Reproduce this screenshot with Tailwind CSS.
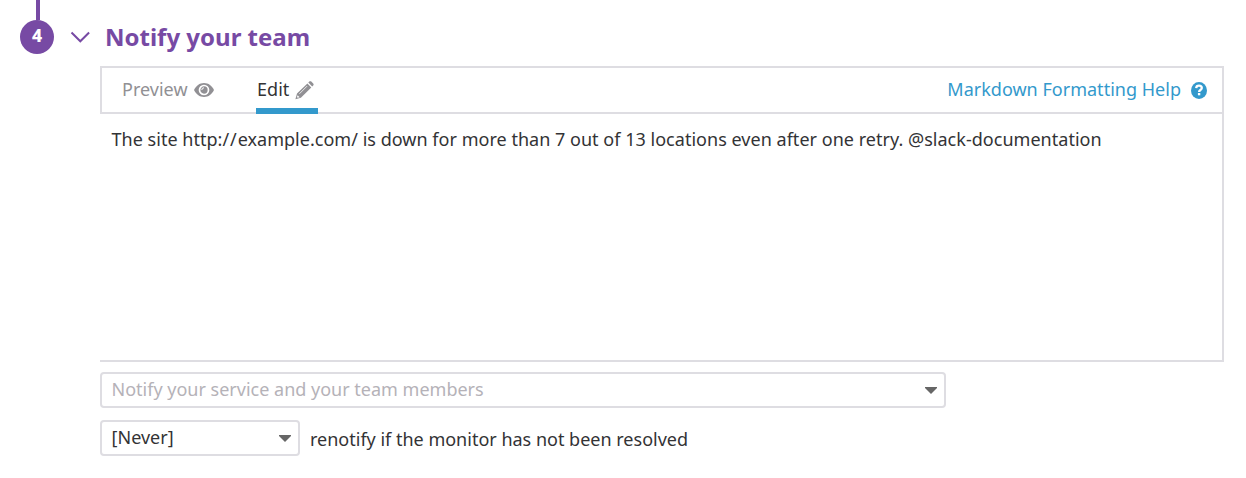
<!DOCTYPE html>
<html lang="en">
<head>
<meta charset="utf-8">
<title>Notify your team</title>
<script src="https://cdn.jsdelivr.net/npm/@tailwindcss/browser@4"></script>
</head>
<body class="overflow-hidden bg-white font-['Noto_Sans',sans-serif] text-[18px] tracking-[0.015px] text-[#333335]">
<section class="flex h-[478px] w-[1246px]">
  <div class="flex w-[54px] flex-col items-end">
    <div class="mr-[14px] h-5 w-1 bg-[#774aa4]"></div>
    <div class="flex size-[34px] items-center justify-center rounded-full bg-[#774aa4] pb-[3px] text-[17.5px] font-extrabold text-white">4</div>
  </div>
  <div class="ml-[46px] w-[1124px]">
    <h2 class="-ml-[30px] flex h-[66px] items-center pt-2 text-[24px] font-bold tracking-normal text-[#774aa4]">
      <svg class="mr-[15px] h-3 w-5" viewBox="0 0 20 12" fill="none" stroke="currentColor" stroke-width="2"><path d="M1.500 1.500 10.300 10.300 19.100 1.500"/></svg>Notify your team
    </h2>
    <div class="flex h-12 justify-between border-2 border-[#dedde2] pr-[15px] pl-5">
      <div class="flex">
        <button class="flex items-center gap-[6px] pb-[2px] text-[#919094]"><span>Preview</span>
          <svg class="mt-0.5 h-[14px] w-5" viewBox="0 0 20 14"><path fill="currentColor" d="M10 0C5.500 0 2 2.800 0 7c2 4.200 5.500 7 10 7s8-2.800 10-7C18 2.800 14.500 0 10 0Z"/><circle cx="10" cy="7" r="4.500" fill="none" stroke="#fff" stroke-width="1.700"/><path d="M10 4.800A2.200 2.200 0 0 0 7.800 7" fill="none" stroke="#fff" stroke-width="1"/></svg>
        </button>
        <button class="-mb-0.5 ml-[42px] flex h-[46px] w-[62px] items-center gap-[6px] border-b-6 border-[#3399cc] pt-[2px] pl-[1.500px]"><span>Edit</span>
          <svg class="mt-0.5 size-[19px] shrink-0 text-[#919094]" viewBox="0 0 19 19" fill="currentColor"><path d="M13.300 1.500 14.300.6c.6-.6 1.400-.6 2 0l1.900 1.900c.6.600.6 1.400 0 2L17.200 5.500ZM12.400 2.400 16.300 6.400 5.900 16.700.4 18.300 2 12.600Z"/><path d="m12.100 5.100-7.700 7.700" stroke="#fff" stroke-width=".8" fill="none"/><path d="m2.600 14.200 2 2-2 .6-.6-.7Z" fill="#fff"/></svg>
        </button>
      </div>
      <a class="flex items-center gap-[10px] pb-[2px] text-[#3399cc]"><span>Markdown Formatting Help</span>
        <svg class="mt-0.5 h-[17px] w-4" viewBox="0 0 16 17"><ellipse cx="8" cy="8.500" rx="8" ry="8.500" fill="currentColor"/><path d="M5.200 6.100C5.300 4.500 6.500 3.700 8 3.700c1.700 0 2.800.9 2.800 2.400 0 2-2.700 1.900-2.700 3.800" fill="none" stroke="#fff" stroke-width="2.300"/><path d="M6.900 11h2.400v2.300H6.900Z" fill="#fff"/></svg>
      </a>
    </div>
    <div class="h-[248px] border-r-2 border-b-2 border-[#dedde2] px-[11.500px] pt-[11px] leading-7 tracking-[0.025px]">The site http:<span class="tracking-[0.9px]">//</span>example.com/ is down for more than 7 out of 13 locations even after one retry. @slack-documentation</div>
    <div class="mt-[10px] flex h-9 w-[846px] items-center justify-between rounded border-2 border-[#dedde2] pr-[7px] pb-[2px] pl-[9.500px] tracking-normal text-[#b5b2b8]"><span>Notify your service and your team members</span>
      <svg class="mt-[2px] h-[7px] w-3" viewBox="0 0 12 7" fill="#666"><path d="M0 0h12v1L6 7 0 1Z"/></svg>
    </div>
    <div class="mt-3 flex items-center">
      <div class="flex h-9 w-[200px] items-center justify-between rounded border-2 border-[#dedde2] pr-[7px] pb-[2px] pl-[9.500px]"><span>[Never]</span>
        <svg class="mt-[2px] h-[7px] w-3" viewBox="0 0 12 7" fill="#666"><path d="M0 0h12v1L6 7 0 1Z"/></svg>
      </div>
      <span class="ml-[10px] pt-[3px] tracking-normal">renotify if the monitor has not been resolved</span>
    </div>
  </div>
</section>
</body>
</html>
